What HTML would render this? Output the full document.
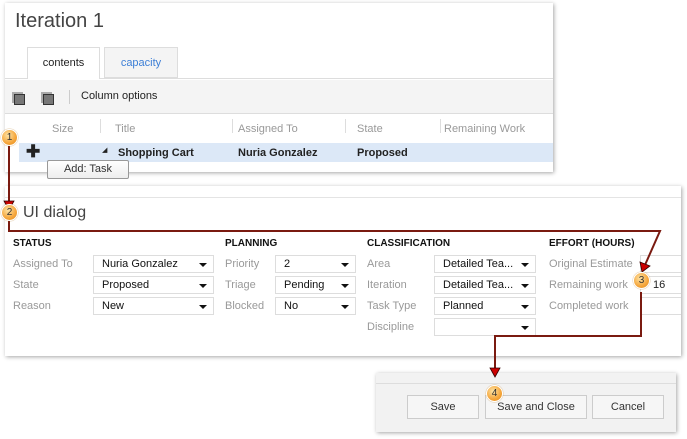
<!DOCTYPE html>
<html><head><meta charset="utf-8"><style>
body{margin:0;width:687px;height:439px;background:#fff;position:relative;overflow:hidden;font-family:"Liberation Sans",sans-serif;font-size:11px;color:#222}
.a{position:absolute;white-space:nowrap}
.panel{position:absolute;background:#fff;box-shadow:1px 1px 4px rgba(0,0,0,.35)}
.lbl{color:#999;font-size:11px}
.hd{font-weight:bold;font-size:10px;color:#111}
.sel{position:absolute;height:18px;border:1px solid #ddd;background:#fff;box-sizing:border-box;font-size:11px;padding-left:8px;line-height:17px;color:#111}
.sel:after{content:"";position:absolute;right:6px;top:7px;border-left:4px solid transparent;border-right:4px solid transparent;border-top:4px solid #111}
.btn{position:absolute;top:395px;height:24px;border:1px solid #ccc;background:#f6f6f6;box-sizing:border-box;text-align:center;line-height:22px;font-size:11px;color:#333}
.circ{position:absolute;width:15px;height:15px;border-radius:50%;background:radial-gradient(circle at 40% 35%,#fde3a5,#f5a53a 60%,#e08a1c);border:1px solid #fff;box-shadow:0 0 1px #a60;font-size:10px;text-align:center;line-height:15px;color:#333}
.ln{position:absolute;background:#7a1a10}
.ic{position:absolute;width:9px;height:9px;background:#777;border:1px solid #333;box-shadow:-2px -2px 0 -0px #aaa}
</style></head><body>
<div class="panel" style="left:5px;top:3px;width:548px;height:169px"></div>
<div class="a" style="left:15px;top:10px;font-size:20px;color:#444">Iteration 1</div>
<div class="a" style="left:5px;top:78px;width:548px;height:1px;background:#ddd"></div>
<div class="a" style="left:27px;top:47px;width:73px;height:32px;background:#fff;border:1px solid #ddd;border-bottom:none;box-sizing:border-box;text-align:center;line-height:30px;font-size:11px">contents</div>
<div class="a" style="left:104px;top:47px;width:74px;height:31px;background:#f4f4f4;border:1px solid #ddd;box-sizing:border-box;text-align:center;line-height:30px;color:#3d7fd6">capacity</div>
<div class="a" style="left:5px;top:80px;width:548px;height:33px;background:#f4f4f4;border-bottom:1px solid #ddd"></div>
<div class="ic" style="left:14px;top:94px"></div>
<div class="ic" style="left:43px;top:94px"></div>
<div class="a" style="left:69px;top:90px;width:1px;height:14px;background:#ccc"></div>
<div class="a" style="left:81px;top:90px;font-size:11px">Column options</div>
<div class="a lbl" style="left:52px;top:123px">Size</div>
<div class="a" style="left:100px;top:119px;width:1px;height:14px;background:#ddd"></div>
<div class="a lbl" style="left:115px;top:123px">Title</div>
<div class="a" style="left:232px;top:119px;width:1px;height:14px;background:#ddd"></div>
<div class="a lbl" style="left:238px;top:123px">Assigned To</div>
<div class="a" style="left:345px;top:119px;width:1px;height:14px;background:#ddd"></div>
<div class="a lbl" style="left:357px;top:123px">State</div>
<div class="a" style="left:440px;top:119px;width:1px;height:14px;background:#ddd"></div>
<div class="a lbl" style="left:444px;top:123px">Remaining Work</div>
<div class="a" style="left:19px;top:143px;width:534px;height:19px;background:#dce8f7"></div>
<div class="a" style="left:26px;top:142px;font-size:17px;font-weight:bold">✚</div>
<div class="a" style="left:102px;top:146px;font-size:7px">◢</div>
<div class="a" style="left:118px;top:147px;font-weight:bold">Shopping Cart</div>
<div class="a" style="left:238px;top:147px;font-weight:bold">Nuria Gonzalez</div>
<div class="a" style="left:357px;top:147px;font-weight:bold">Proposed</div>
<div class="a" style="left:47px;top:160px;width:82px;height:19px;background:linear-gradient(#fff,#eee);border:1px solid #999;border-radius:2px;box-sizing:border-box;text-align:center;line-height:17px;color:#333">Add: Task</div>

<div class="panel" style="left:5px;top:186px;width:676px;height:170px"></div>
<div class="a" style="left:5px;top:197px;width:676px;height:1px;background:#e4e4e4"></div>
<div class="a" style="left:23px;top:204px;font-size:16px;color:#444">UI dialog</div>
<div class="a hd" style="left:13px;top:238px">STATUS</div>
<div class="a hd" style="left:225px;top:238px">PLANNING</div>
<div class="a hd" style="left:367px;top:238px">CLASSIFICATION</div>
<div class="a hd" style="left:549px;top:238px">EFFORT (HOURS)</div>
<div class="a lbl" style="left:13px;top:258px">Assigned To</div>
<div class="a lbl" style="left:13px;top:279px">State</div>
<div class="a lbl" style="left:13px;top:300px">Reason</div>
<div class="sel" style="left:93px;top:255px;width:121px">Nuria Gonzalez</div>
<div class="sel" style="left:93px;top:276px;width:121px">Proposed</div>
<div class="sel" style="left:93px;top:297px;width:121px">New</div>
<div class="a lbl" style="left:225px;top:258px">Priority</div>
<div class="a lbl" style="left:225px;top:279px">Triage</div>
<div class="a lbl" style="left:225px;top:300px">Blocked</div>
<div class="sel" style="left:275px;top:255px;width:81px">2</div>
<div class="sel" style="left:275px;top:276px;width:81px">Pending</div>
<div class="sel" style="left:275px;top:297px;width:81px">No</div>
<div class="a lbl" style="left:367px;top:258px">Area</div>
<div class="a lbl" style="left:367px;top:279px">Iteration</div>
<div class="a lbl" style="left:367px;top:300px">Task Type</div>
<div class="a lbl" style="left:367px;top:321px">Discipline</div>
<div class="sel" style="left:434px;top:255px;width:102px">Detailed Tea...</div>
<div class="sel" style="left:434px;top:276px;width:102px">Detailed Tea...</div>
<div class="sel" style="left:434px;top:297px;width:102px">Planned</div>
<div class="sel" style="left:434px;top:318px;width:102px"></div>
<div class="a lbl" style="left:549px;top:258px">Original Estimate</div>
<div class="a lbl" style="left:549px;top:279px">Remaining work</div>
<div class="a lbl" style="left:549px;top:300px">Completed work</div>
<div class="a" style="left:640px;top:255px;width:41px;height:18px;border:1px solid #ddd;border-right:none;box-sizing:border-box"></div>
<div class="a" style="left:640px;top:276px;width:41px;height:18px;border:1px solid #ddd;border-right:none;box-sizing:border-box;padding-left:12px;line-height:16px">16</div>
<div class="a" style="left:640px;top:297px;width:41px;height:18px;border:1px solid #ddd;border-right:none;box-sizing:border-box"></div>

<div class="panel" style="left:376px;top:373px;width:300px;height:59px;background:#f2f2f2"></div>
<div class="a" style="left:376px;top:383px;width:300px;height:1px;background:#ddd"></div>
<div class="btn" style="left:407px;width:72px">Save</div>
<div class="btn" style="left:485px;width:102px">Save and Close</div>
<div class="btn" style="left:592px;width:72px">Cancel</div>

<div class="ln" style="left:8px;top:143px;width:2px;height:62px"></div>
<svg class="a" style="left:0;top:0" width="687" height="439">
<polygon points="4,201 14,201 9,210" fill="#c00" stroke="#300" stroke-width=".8"/>
<polyline points="9,218 9,231 660,231 645,265" fill="none" stroke="#7a1a10" stroke-width="2"/>
<polygon points="640,262 650,266 642,272" fill="#c00" stroke="#300" stroke-width=".8"/>
<polyline points="641,292 641,336 495,336 495,372" fill="none" stroke="#7a1a10" stroke-width="2"/>
<polygon points="490,368 500,368 495,377" fill="#c00" stroke="#300" stroke-width=".8"/>
</svg>
<div class="circ" style="left:1px;top:129px">1</div>
<div class="circ" style="left:1px;top:204px">2</div>
<div class="circ" style="left:633px;top:272px">3</div>
<div class="circ" style="left:486px;top:385px">4</div>
</body></html>
